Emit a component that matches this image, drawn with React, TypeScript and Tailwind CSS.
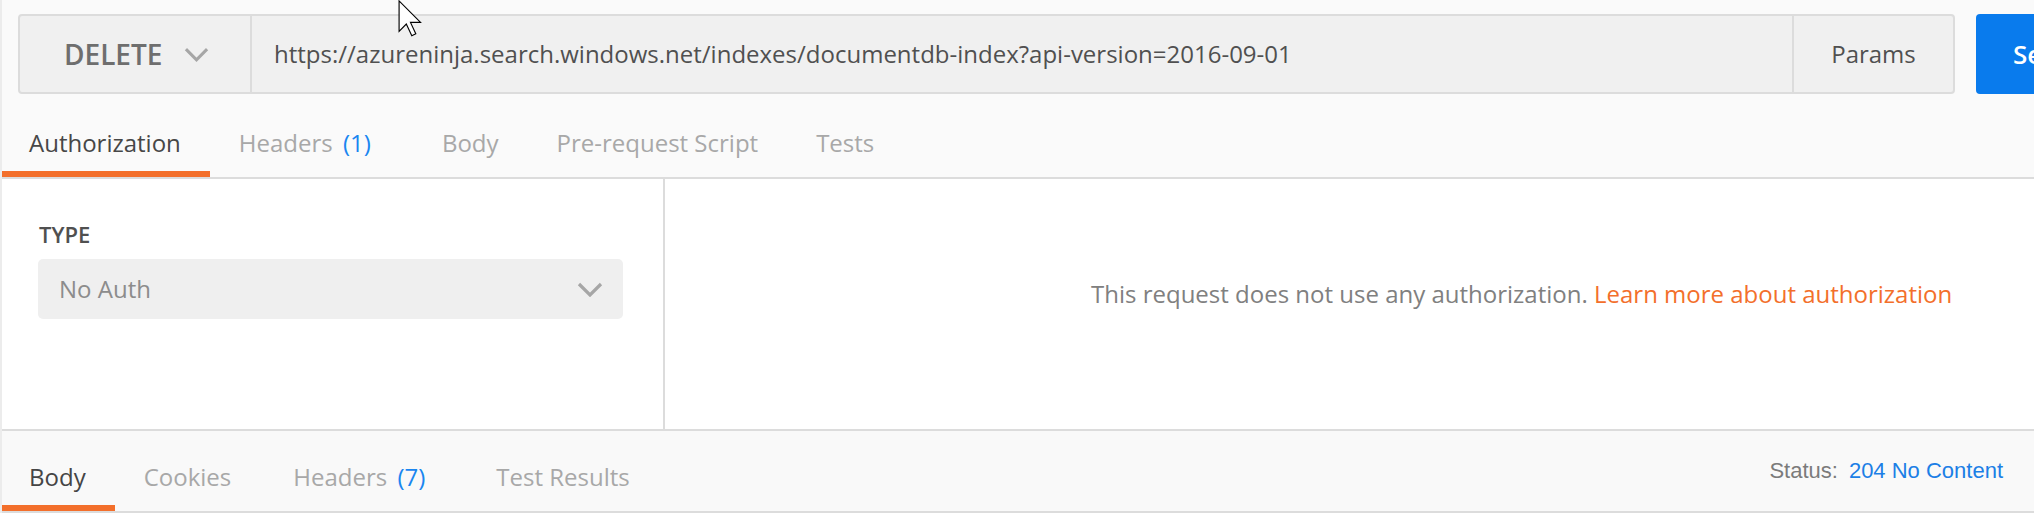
import React from "react";

function Chevron({ className }: { className?: string }) {
  return (
    <svg viewBox="0 0 26 15" className={className} fill="none" stroke="currentColor" strokeWidth="3.2">
      <path d="M2 2 L13 13 L24 2" />
    </svg>
  );
}

function Tab({ children, active }: { children: React.ReactNode; active?: boolean }) {
  return (
    <div
      className={
        "pt-[37px] pb-[16px] px-[29px] border-b-[6px] leading-[24px] text-[24px] whitespace-nowrap " +
        (active ? "border-[#f36f2b] text-[#474747]" : "border-transparent text-[#a8a8a8]")
      }
    >
      {children}
    </div>
  );
}

function BottomTab({ children, active, extra }: { children: React.ReactNode; active?: boolean; extra?: string }) {
  return (
    <div
      className={
        "pt-[34px] pb-[16px] pl-[29px] border-b-[6px] leading-[24px] text-[24px] whitespace-nowrap " +
        (extra ? extra + " " : "pr-[29px] ") +
        (active ? "border-[#f36f2b] text-[#454545]" : "border-transparent text-[#a8a8a8]")
      }
    >
      {children}
    </div>
  );
}

export default function App() {
  return (
    <div className="relative w-[2034px] h-[513px] overflow-hidden bg-[#fafafa] font-['Open_Sans',sans-serif]">
      {/* request bar */}
      <div className="flex items-start pt-[14px] pl-[18px]">
        <div className="flex h-[80px] w-[1937px] shrink-0 rounded-[4px] border-2 border-[#dcdcdc] bg-[#f0f0f0]">
          <div className="flex w-[232px] shrink-0 items-center pl-[44px] border-r-2 border-[#dcdcdc]">
            <span className="text-[28px] font-semibold text-[#6e6e6e] leading-none">DELETE</span>
            <Chevron className="ml-[22px] w-[25px] h-[15px] text-[#a6a6a6]" />
          </div>
          <div className="flex flex-1 items-center pl-[22px] text-[24px] text-[#505050] whitespace-nowrap">
            https://azureninja.search.windows.net/indexes/documentdb-index?api-version=2016-09-01
          </div>
          <div className="flex w-[161px] shrink-0 items-center justify-center border-l-2 border-[#dcdcdc] text-[24px] text-[#505050]">
            Params
          </div>
        </div>
        <div className="ml-[21px] flex h-[80px] w-[180px] shrink-0 items-center rounded-[4px] bg-[#097bed] pl-[37px] text-[26px] font-semibold text-white">
          Send
        </div>
      </div>

      {/* request tabs */}
      <div className="flex h-[85px] border-b-2 border-[#dcdcdc]">
        <Tab active>Authorization</Tab>
        <Tab>
          Headers <span className="text-[#1a86f0] pl-[4px] pr-[13px]">(1)</span>
        </Tab>
        <Tab>Body</Tab>
        <Tab>Pre-request Script</Tab>
        <Tab>Tests</Tab>
      </div>

      {/* auth panels */}
      <div className="flex h-[252px] border-b-2 border-[#dcdcdc] bg-white">
        <div className="w-[665px] shrink-0 border-r-2 border-[#dcdcdc] pl-[38px] pt-[44px]">
          <div className="pl-[1px] text-[22px] font-semibold leading-[22px] text-[#505050]">TYPE</div>
          <div className="mt-[14px] flex h-[60px] w-[585px] items-center justify-between rounded-[5px] bg-[#efefef] pl-[21px] pr-[20px]">
            <span className="text-[24px] text-[#8c8c8c]">No Auth</span>
            <Chevron className="w-[26px] h-[15px] text-[#a6a6a6]" />
          </div>
        </div>
        <div className="flex-1 pl-[426px] pt-[103px] text-[24px] leading-[24px] text-[#808080] whitespace-nowrap">
          This request does not use any authorization.{" "}
          <span className="text-[#f36f2b]">Learn more about authorization</span>
        </div>
      </div>

      {/* response bar */}
      <div className="flex h-[82px] border-b-2 border-[#dcdcdc] bg-[#f9f9f9]">
        <BottomTab active>Body</BottomTab>
        <BottomTab extra="pr-[33px]">Cookies</BottomTab>
        <BottomTab>
          Headers <span className="text-[#1a86f0] pl-[4px] pr-[13px]">(7)</span>
        </BottomTab>
        <BottomTab>Test Results</BottomTab>
        <div className="ml-auto flex pt-[29px] pr-[31px] font-['Liberation_Sans',Arial,sans-serif] text-[22px] leading-[22px] whitespace-nowrap">
          <span className="text-[#7b7b7b]">Status:</span>
          <span className="ml-[11px] text-[#1c7fe6]">204 No Content</span>
        </div>
      </div>

      {/* left window edge */}
      <div className="absolute left-0 top-0 h-[513px] w-[2px] bg-[#ececec]" />

      {/* mouse cursor */}
      <svg
        className="absolute left-[398px] top-[0px]"
        width="24"
        height="37"
        viewBox="0 0 12.5 19.5"
        fill="#ffffff"
        stroke="#000000"
        strokeWidth="0.6"
      >
        <path d="M0.5 0.5 L0.5 16.5 L4.3 12.7 L7.2 18.8 L9.3 17.8 L6.5 11.8 L11.8 11.8 Z" />
      </svg>
    </div>
  );
}
